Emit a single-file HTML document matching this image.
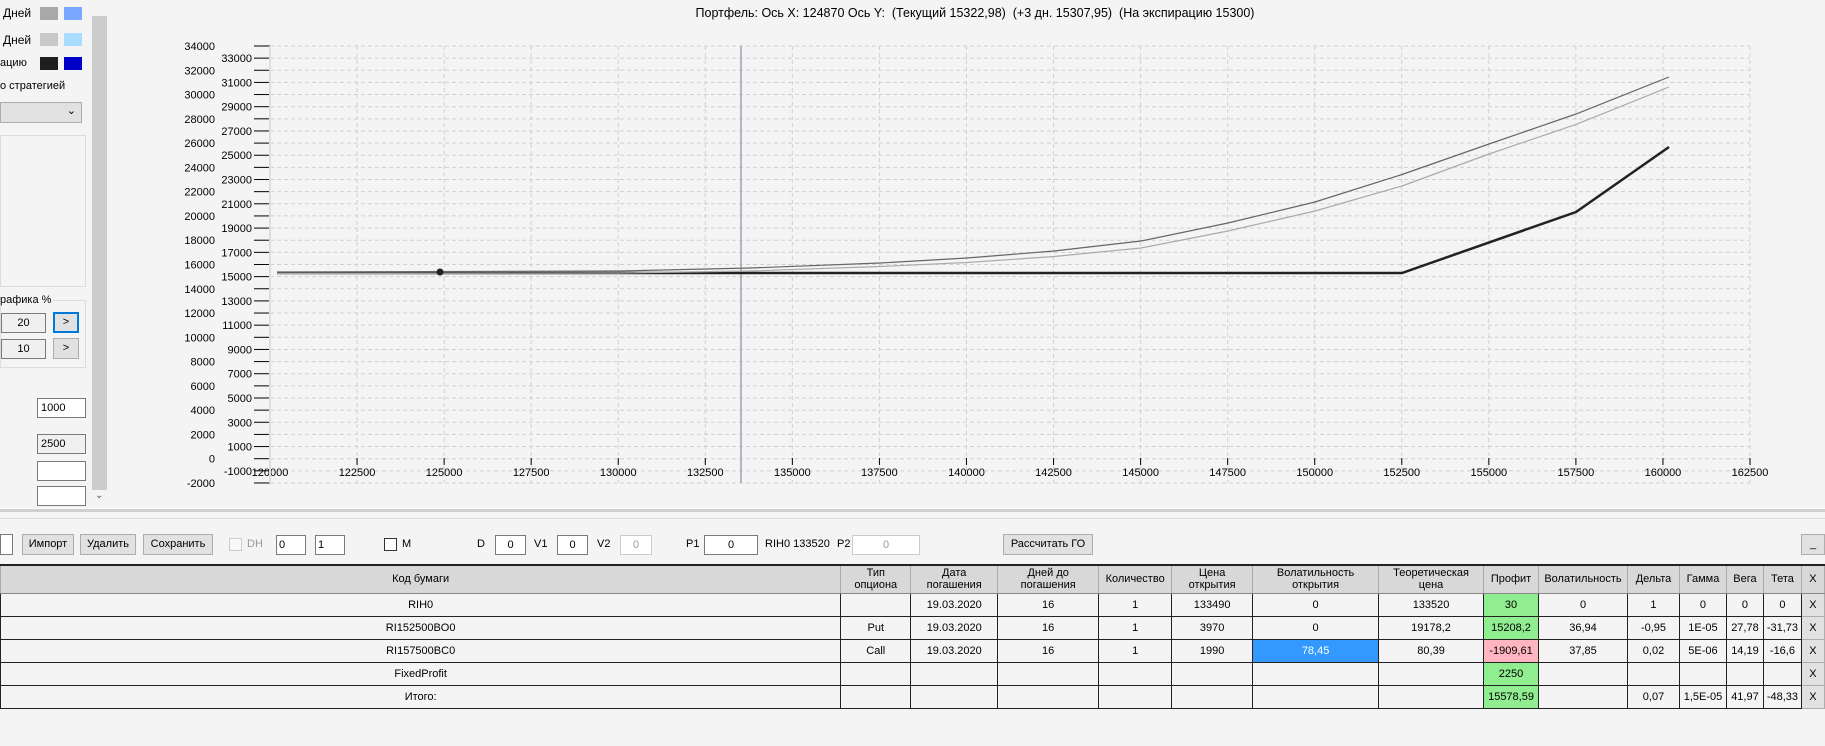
<!DOCTYPE html>
<html><head><meta charset="utf-8"><style>
*{box-sizing:border-box;margin:0;padding:0}
body{width:1825px;height:746px;background:#f4f4f4;font-family:"Liberation Sans",sans-serif;font-size:12px;color:#000;position:relative;overflow:hidden}
.a{position:absolute;white-space:nowrap}
.sw{position:absolute;width:18px;height:13px}
.btn{position:absolute;background:#e1e1e1;border:1px solid #adadad;text-align:center;font-size:11px;line-height:19px}
.inp{position:absolute;background:#fff;border:1px solid #7a7a7a;text-align:center;font-size:11px;line-height:18px}
table{position:absolute;left:0;top:564px;border-collapse:collapse;font-size:11px;border-top:2px solid #222}
td{border:1px solid #222;text-align:center;height:23px;padding:0;background:#f4f4f4}
tr.h td{background:#d8d8d8;height:28px;border-color:#aaa;border-bottom:1px solid #888;line-height:12px}
td.x{background:#e1e1e1;border:1px solid #adadad}
</style></head><body>
<div class="a" style="left:3px;top:6px">Дней</div>
<div class="sw" style="left:40px;top:7px;background:#a8a8a8"></div>
<div class="sw" style="left:64px;top:7px;background:#7aa7ff"></div>
<div class="a" style="left:3px;top:33px">Дней</div>
<div class="sw" style="left:40px;top:33px;background:#c8c8c8"></div>
<div class="sw" style="left:64px;top:33px;background:#aadcff"></div>
<div class="a" style="left:0;top:57px;font-size:11px">ацию</div>
<div class="sw" style="left:40px;top:57px;background:#1e1e1e"></div>
<div class="sw" style="left:64px;top:57px;background:#0000c8"></div>
<div class="a" style="left:0;top:80px;font-size:11px">о стратегией</div>
<div class="a" style="left:0;top:102px;width:82px;height:21px;background:#e1e1e1;border:1px solid #adadad"><span style="position:absolute;right:5px;top:1px;font-size:11px">&#8964;</span></div>
<div class="a" style="left:0;top:135px;width:86px;height:152px;border:1px solid #dcdcdc"></div>
<div class="a" style="left:0;top:300px;width:86px;height:68px;border:1px solid #dcdcdc"></div>
<div class="a" style="left:0;top:294px;background:#f4f4f4;font-size:11px;padding-right:2px">рафика %</div>
<div class="inp" style="left:1px;top:313px;width:45px;height:20px;background:#f0f0f0">20</div>
<div class="btn" style="left:53px;top:312px;width:26px;height:21px;border:2px solid #0078d7;line-height:17px">&gt;</div>
<div class="inp" style="left:1px;top:339px;width:45px;height:20px;background:#f0f0f0">10</div>
<div class="btn" style="left:53px;top:338px;width:26px;height:21px">&gt;</div>
<div class="inp" style="left:37px;top:398px;width:49px;height:20px;text-align:left;padding-left:3px">1000</div>
<div class="inp" style="left:37px;top:434px;width:49px;height:20px;text-align:left;padding-left:3px;background:#f0f0f0">2500</div>
<div class="inp" style="left:37px;top:461px;width:49px;height:20px"></div>
<div class="inp" style="left:37px;top:486px;width:49px;height:20px"></div>
<div class="a" style="left:92px;top:16px;width:15px;height:474px;background:#cdcdcd"></div>
<div class="a" style="left:95px;top:490px;font-size:10px;color:#555">&#8964;</div>
<div class="a" style="left:96px;top:-6px;font-size:10px;color:#555">^</div>

<div class="a" style="left:0;top:6px;width:1950px;text-align:center;font-size:12.5px">Портфель: Ось X: 124870 Ось Y:&nbsp; (Текущий 15322,98)&nbsp; (+3 дн. 15307,95)&nbsp; (На экспирацию 15300)</div>
<svg class="a" style="left:0;top:0" width="1825" height="510" font-family="Liberation Sans" font-size="11">
<g stroke="#d0d0d0" stroke-dasharray="4,3" stroke-width="1" id="grid"></g>
<g id="yl"></g>
<line x1="741" y1="46" x2="741" y2="483" stroke="#9aa4b8" stroke-width="1.5"/>
<line x1="270" y1="46" x2="270" y2="483" stroke="#ddd" stroke-width="2"/>
<polyline fill="none" stroke="#222" stroke-width="2.5" points="277,273 1402,273 1576,212 1669,147"/>
<polyline fill="none" stroke="#aaa" stroke-width="1.2" points="277,273.5 620,273 750,271 880,266.5 967,262.5 1054,256.5 1141,248 1228,231 1315,211 1402,186 1489,154 1576,124.4 1669,87"/>
<polyline fill="none" stroke="#666" stroke-width="1.2" points="277,272 620,271 750,268 880,263 967,258 1054,251 1141,241 1228,223 1315,202 1402,174.5 1489,144 1576,114 1669,77"/>
<circle cx="440" cy="272" r="3.5" fill="#222"/>
</svg>
<script>
(function(){var g=document.getElementById('grid'),yl=document.getElementById('yl'),s='';
for(var v=34000;v>=-2000;v-=1000){var y=46+(34000-v)*0.012138;
s+='<line x1="270" x2="1750" y1="'+y+'" y2="'+y+'"/>';}
for(var i=0;i<=17;i++){var x=270+i*87.06;s+='<line y1="46" y2="483" x1="'+x+'" x2="'+x+'"/>';}
g.innerHTML=s;var t='';
for(var v=34000;v>=-2000;v-=1000){var y=46+(34000-v)*0.012138;
t+='<line x1="254" x2="270" y1="'+y+'" y2="'+y+'" stroke="#000"/>';
if(v%2000==0)t+='<text x="215" y="'+(y+4)+'" text-anchor="end">'+v+'</text>';
else t+='<text x="252" y="'+(y+4)+'" text-anchor="end">'+v+'</text>';}
for(var i=0;i<=17;i++){var x=270+i*87.06;t+='<line x1="'+x+'" x2="'+x+'" y1="458" y2="465" stroke="#000"/><text x="'+x+'" y="476" text-anchor="middle">'+(120000+i*2500)+'</text>';}
yl.innerHTML=t;})();
</script>

<div class="a" style="left:0;top:508px;width:1825px;height:4px;background:#d0d0d0;border-top:1px solid #fff"></div>
<div class="a" style="left:0;top:518px;width:1825px;height:1px;background:#ddd"></div>

<div class="a" style="left:0;top:534px;width:13px;height:21px;border:1px solid #7a7a7a;background:#fff"></div>
<div class="btn" style="left:22px;top:534px;width:52px;height:21px">Импорт</div>
<div class="btn" style="left:80px;top:534px;width:56px;height:21px">Удалить</div>
<div class="btn" style="left:143px;top:534px;width:70px;height:21px">Сохранить</div>
<div class="a" style="left:229px;top:538px;width:13px;height:13px;border:1px solid #ccc;background:#f8f8f8"></div>
<div class="a" style="left:247px;top:538px;color:#999;font-size:11px">DH</div>
<div class="inp" style="left:276px;top:535px;width:30px;height:20px;text-align:left;padding-left:2px">0</div>
<div class="inp" style="left:315px;top:535px;width:30px;height:20px;text-align:left;padding-left:2px">1</div>
<div class="a" style="left:384px;top:538px;width:13px;height:13px;border:1px solid #333;background:#fff"></div>
<div class="a" style="left:402px;top:538px;font-size:11px">M</div>
<div class="a" style="left:477px;top:538px;font-size:11px">D</div>
<div class="inp" style="left:495px;top:535px;width:31px;height:20px">0</div>
<div class="a" style="left:534px;top:538px;font-size:11px">V1</div>
<div class="inp" style="left:557px;top:535px;width:31px;height:20px">0</div>
<div class="a" style="left:597px;top:538px;font-size:11px">V2</div>
<div class="inp" style="left:620px;top:535px;width:32px;height:20px;border-color:#ccc;color:#999">0</div>
<div class="a" style="left:686px;top:538px;font-size:11px">P1</div>
<div class="inp" style="left:704px;top:535px;width:54px;height:20px">0</div>
<div class="a" style="left:765px;top:538px;font-size:11px">RIH0 133520</div>
<div class="a" style="left:837px;top:538px;font-size:11px">P2</div>
<div class="inp" style="left:852px;top:535px;width:68px;height:20px;border-color:#ccc;color:#999">0</div>
<div class="btn" style="left:1003px;top:534px;width:90px;height:21px">Рассчитать ГО</div>
<div class="btn" style="left:1801px;top:534px;width:24px;height:21px">_</div>

<table>
<colgroup><col style="width:841px"><col style="width:70px"><col style="width:87px"><col style="width:101px"><col style="width:73px"><col style="width:81px"><col style="width:126px"><col style="width:105px"><col style="width:55px"><col style="width:89px"><col style="width:52px"><col style="width:47px"><col style="width:37px"><col style="width:38px"><col style="width:23px"></colgroup>
<tr class="h"><td>Код бумаги</td><td>Тип<br>опциона</td><td>Дата<br>погашения</td><td>Дней до<br>погашения</td><td>Количество</td><td>Цена<br>открытия</td><td>Волатильность<br>открытия</td><td>Теоретическая<br>цена</td><td>Профит</td><td>Волатильность</td><td>Дельта</td><td>Гамма</td><td>Вега</td><td>Тета</td><td>X</td></tr>
<tr><td>RIH0</td><td></td><td>19.03.2020</td><td>16</td><td>1</td><td>133490</td><td>0</td><td>133520</td><td style="background:#90ee90">30</td><td>0</td><td>1</td><td>0</td><td>0</td><td>0</td><td class="x">X</td></tr>
<tr><td>RI152500BO0</td><td>Put</td><td>19.03.2020</td><td>16</td><td>1</td><td>3970</td><td>0</td><td>19178,2</td><td style="background:#90ee90">15208,2</td><td>36,94</td><td>-0,95</td><td>1E-05</td><td>27,78</td><td>-31,73</td><td class="x">X</td></tr>
<tr><td>RI157500BC0</td><td>Call</td><td>19.03.2020</td><td>16</td><td>1</td><td>1990</td><td style="background:#3399ff;color:#fff">78,45</td><td>80,39</td><td style="background:#ffb6c1">-1909,61</td><td>37,85</td><td>0,02</td><td>5E-06</td><td>14,19</td><td>-16,6</td><td class="x">X</td></tr>
<tr><td>FixedProfit</td><td></td><td></td><td></td><td></td><td></td><td></td><td></td><td style="background:#90ee90">2250</td><td></td><td></td><td></td><td></td><td></td><td class="x">X</td></tr>
<tr><td>Итого:</td><td></td><td></td><td></td><td></td><td></td><td></td><td></td><td style="background:#90ee90">15578,59</td><td></td><td>0,07</td><td>1,5E-05</td><td>41,97</td><td>-48,33</td><td class="x">X</td></tr>
</table>
</body></html>
